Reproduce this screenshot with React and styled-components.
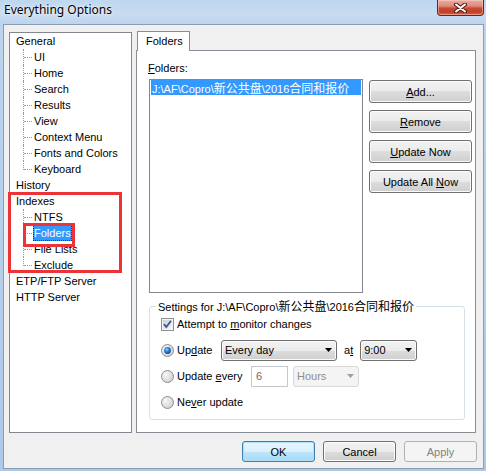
import React from "react";
import styled, { createGlobalStyle } from "styled-components";

const Global = createGlobalStyle`
  html, body { margin: 0; padding: 0; background: #b8d1ec; }
  body {
    font-family: "Liberation Sans", Arial, sans-serif;
    font-size: 11px;
    color: #000;
  }
  * { box-sizing: border-box; }
`;

const Window = styled.div`
  position: relative;
  width: 486px;
  height: 471px;
  display: flex;
  flex-direction: column;
  overflow: hidden;
  background: linear-gradient(180deg, #bed6ef 0px, #c8dcf2 14px, #bcd4ee 24px, #aec9e8 100%);
`;

const TitleBar = styled.div`
  flex: none;
  height: 24px;
  display: flex;
  align-items: flex-start;
  justify-content: space-between;
  padding: 0 2px 0 4px;
`;

const Title = styled.div`
  font-family: "Noto Sans", "Liberation Sans", sans-serif;
  font-size: 12px;
  line-height: 20px;
  color: #000;
  text-shadow: 0 0 6px rgba(255, 255, 255, 0.9), 0 0 2px rgba(255, 255, 255, 0.8);
`;

const CloseButton = styled.div`
  width: 47px;
  height: 16px;
  display: flex;
  align-items: center;
  justify-content: center;
  border: 1px solid #6a2418;
  border-top: none;
  border-radius: 0 0 4px 4px;
  background: linear-gradient(180deg, #e9aca0 0%, #dc8b7b 40%, #c94a33 55%, #c63f27 80%, #d56a4c 100%);
  box-shadow: inset 0 0 0 1px rgba(255, 220, 210, 0.45);
`;

const Client = styled.div`
  flex: 1;
  margin: 0 2px 2px 3px;
  border: 1px solid #8a9db3;
  background: #f0f0f0;
  display: flex;
  flex-direction: column;
  padding: 6px 6px 0 5px;
`;

const MainRow = styled.div`
  display: flex;
  align-items: flex-start;
  gap: 4px;
`;

const Tree = styled.div`
  flex: none;
  width: 123px;
  height: 401px;
  margin-top: 1px;
  border: 1px solid #828790;
  background: #fff;
  padding: 0 0 0 5px;
`;

const NodeRow = styled.div`
  height: 16px;
  line-height: 16px;
  white-space: nowrap;
`;

const Children = styled.div`
  margin-left: 8px;
`;

const ChildRow = styled.div`
  position: relative;
  height: 16px;
  line-height: 16px;
  padding-left: 10px;
  white-space: nowrap;

  &::before {
    content: "";
    position: absolute;
    left: 0;
    top: 0;
    height: ${(p) => (p.$last ? "9px" : "16px")};
    border-left: 1px dotted #9a9a9a;
  }
  &::after {
    content: "";
    position: absolute;
    left: 1px;
    top: 8px;
    width: 8px;
    border-top: 1px dotted #9a9a9a;
  }
`;

const NodeLabel = styled.span`
  display: inline-block;
  padding: 0 1px;
  height: 16px;
  line-height: 16px;
  background: ${(p) => (p.$selected ? "#3399ff" : "transparent")};
  color: ${(p) => (p.$selected ? "#fff" : "#000")};
  outline: ${(p) => (p.$selected ? "1px dotted #1b3f6b" : "none")};
  outline-offset: -1px;
`;

const Tabs = styled.div`
  flex: none;
  width: 340px;
  display: flex;
  flex-direction: column;
`;

const TabStrip = styled.div`
  display: flex;
  height: 20px;
  padding-left: 1px;
`;

const Tab = styled.div`
  position: relative;
  z-index: 1;
  height: 20px;
  padding: 0 6px 0 8px;
  border: 1px solid #898c95;
  border-bottom: none;
  background: #fff;
  line-height: 18px;
`;

const TabPanel = styled.div`
  height: 383px;
  margin-top: -1px;
  border: 1px solid #898c95;
  background: #fff;
  padding: 10px 2px 0 11px;
  display: flex;
  flex-direction: column;
`;

const FieldLabel = styled.div`
  height: 14px;
  line-height: 14px;
  margin-bottom: 4px;
`;

const ListRow = styled.div`
  display: flex;
  align-items: flex-start;
  gap: 6px;
  padding-left: 1px;
`;

const ListBox = styled.div`
  flex: none;
  width: 214px;
  height: 214px;
  border: 1px solid #828790;
  background: #fff;
  padding: 0 1px;
`;

const ListItem = styled.div`
  height: 15px;
  line-height: 15px;
  padding-left: 1px;
  background: #3399ff;
  color: #fff;
  white-space: nowrap;
`;

const Cjk = styled.span`
  font-family: "Noto Sans CJK SC", sans-serif;
  font-size: 12px;
`;

const ButtonColumn = styled.div`
  display: flex;
  flex-direction: column;
  gap: 7px;
  margin-top: 1px;
`;

const Button = styled.div`
  flex: none;
  width: ${(p) => p.$w}px;
  height: ${(p) => p.$h}px;
  display: flex;
  align-items: center;
  justify-content: center;
  border-radius: 3px;
  border: 1px solid ${(p) => (p.$disabled ? "#adb2b5" : p.$default ? "#3c7fb1" : "#707070")};
  color: ${(p) => (p.$disabled ? "#838383" : "#000")};
  background: ${(p) =>
    p.$disabled
      ? "#f4f4f4"
      : p.$default
      ? "linear-gradient(180deg, #eaf6fd 0%, #d9f0fc 50%, #bee6fd 50%, #a7d9f5 100%)"
      : "linear-gradient(180deg, #f2f2f2 0%, #ebebeb 50%, #dddddd 50%, #cfcfcf 100%)"};
  box-shadow: ${(p) =>
    p.$disabled ? "none" : p.$default ? "inset 0 0 0 1px #aee0fb" : "inset 0 0 0 1px #fcfcfc"};
`;

const GroupBox = styled.fieldset`
  width: 316px;
  margin: 6px 0 0 1px;
  padding: 0 0 6px 11px;
  border: 1px solid #d5dfe5;
  border-radius: 3px;
  display: flex;
  flex-direction: column;
  gap: 4px;
`;

const Legend = styled.legend`
  padding: 0 2px;
  margin-left: -5px;
  line-height: 14px;
  height: 14px;
  white-space: nowrap;
`;

const OptionRow = styled.div`
  height: 22px;
  display: flex;
  align-items: center;
`;

const OptionLabel = styled.span`
  margin-left: 3px;
  width: ${(p) => (p.$w ? `${p.$w}px` : "auto")};
  flex: none;
  white-space: nowrap;
`;

const Combo = styled.div`
  flex: none;
  width: ${(p) => p.$w}px;
  height: 21px;
  margin-left: ${(p) => p.$ml || 0}px;
  display: flex;
  align-items: center;
  justify-content: space-between;
  padding: 0 4px 0 3px;
  border-radius: 3px;
  border: 1px solid ${(p) => (p.$disabled ? "#d9d9d9" : "#707070")};
  color: ${(p) => (p.$disabled ? "#8d8d8d" : "#000")};
  background: ${(p) =>
    p.$disabled
      ? "#f4f4f4"
      : "linear-gradient(180deg, #f2f2f2 0%, #ebebeb 50%, #dddddd 50%, #cfcfcf 100%)"};
  box-shadow: ${(p) => (p.$disabled ? "none" : "inset 0 0 0 1px #fcfcfc")};
`;

const EditBox = styled.div`
  flex: none;
  width: 37px;
  height: 21px;
  line-height: 19px;
  padding-left: 4px;
  border: 1px solid #c6c9cc;
  background: #fff;
  color: #6d6d6d;
`;

const Small = styled.span`
  margin: 0 7px;
`;

const Footer = styled.div`
  display: flex;
  justify-content: flex-end;
  gap: 8px;
  margin-top: 8px;
`;

const Annotation = styled.div`
  position: absolute;
  left: ${(p) => p.$x}px;
  top: ${(p) => p.$y}px;
  width: ${(p) => p.$w}px;
  height: ${(p) => p.$h}px;
  border: 3px solid #ec3338;
  pointer-events: none;
`;

const CloseGlyph = () => (
  <svg width="13" height="10" viewBox="0 0 13 10">
    <path d="M2 1.5 L11 8.5 M11 1.5 L2 8.5" stroke="#4a1d16" strokeWidth="4" strokeLinecap="round" />
    <path d="M2 1.5 L11 8.5 M11 1.5 L2 8.5" stroke="#ffffff" strokeWidth="2" strokeLinecap="round" />
  </svg>
);

const CheckBox = () => (
  <svg width="13" height="13" viewBox="0 0 13 13">
    <defs>
      <linearGradient id="cbg" x1="0" y1="0" x2="1" y2="1">
        <stop offset="0" stopColor="#cbcfd5" />
        <stop offset="1" stopColor="#f7f7f7" />
      </linearGradient>
    </defs>
    <rect x="0.5" y="0.5" width="12" height="12" fill="#f4f4f4" stroke="#8e8f8f" />
    <rect x="2" y="2" width="9" height="9" fill="url(#cbg)" />
    <path d="M3 6.2 L5.3 9 L10 2.8" stroke="#3c5a99" strokeWidth="1.9" fill="none" />
  </svg>
);

const Radio = ({ checked }) => (
  <svg width="13" height="13" viewBox="0 0 13 13">
    <defs>
      <radialGradient id="rbg" cx="0.35" cy="0.35" r="0.8">
        <stop offset="0" stopColor="#f6f6f6" />
        <stop offset="1" stopColor="#c9ccd1" />
      </radialGradient>
      <radialGradient id="rdot" cx="0.4" cy="0.35" r="0.7">
        <stop offset="0" stopColor="#8ad4ff" />
        <stop offset="0.5" stopColor="#2a7bd0" />
        <stop offset="1" stopColor="#0d3f8a" />
      </radialGradient>
    </defs>
    <circle cx="6.5" cy="6.5" r="6" fill="url(#rbg)" stroke="#8e8f8f" />
    {checked && <circle cx="6.5" cy="6.5" r="3.4" fill="url(#rdot)" />}
  </svg>
);

const Arrow = ({ color = "#000" }) => (
  <svg width="7" height="4" viewBox="0 0 7 4">
    <path d="M0 0 L7 0 L3.5 4 Z" fill={color} />
  </svg>
);

const treeData = [
  {
    label: "General",
    children: ["UI", "Home", "Search", "Results", "View", "Context Menu", "Fonts and Colors", "Keyboard"],
  },
  { label: "History" },
  { label: "Indexes", children: ["NTFS", "Folders", "File Lists", "Exclude"] },
  { label: "ETP/FTP Server" },
  { label: "HTTP Server" },
];

export default function App() {
  return (
    <>
      <Global />
      <Window>
        <TitleBar>
          <Title>Everything Options</Title>
          <CloseButton>
            <CloseGlyph />
          </CloseButton>
        </TitleBar>
        <Client>
          <MainRow>
            <Tree>
              {treeData.map((node) => (
                <React.Fragment key={node.label}>
                  <NodeRow>
                    <NodeLabel>{node.label}</NodeLabel>
                  </NodeRow>
                  {node.children && (
                    <Children>
                      {node.children.map((c, i) => (
                        <ChildRow key={c} $last={i === node.children.length - 1}>
                          <NodeLabel $selected={c === "Folders"}>{c}</NodeLabel>
                        </ChildRow>
                      ))}
                    </Children>
                  )}
                </React.Fragment>
              ))}
            </Tree>
            <Tabs>
              <TabStrip>
                <Tab>Folders</Tab>
              </TabStrip>
              <TabPanel>
                <FieldLabel>
                  <u>F</u>olders:
                </FieldLabel>
                <ListRow>
                  <ListBox>
                    <ListItem>
                      J:\AF\Copro\<Cjk>新公共盘</Cjk>\2016<Cjk>合同和报价</Cjk>
                    </ListItem>
                  </ListBox>
                  <ButtonColumn>
                    <Button $w={103} $h={23}>
                      <span><u>A</u>dd...</span>
                    </Button>
                    <Button $w={103} $h={23}>
                      <span><u>R</u>emove</span>
                    </Button>
                    <Button $w={103} $h={23}>
                      <span><u>U</u>pdate Now</span>
                    </Button>
                    <Button $w={103} $h={23}>
                      <span>Update All <u>N</u>ow</span>
                    </Button>
                  </ButtonColumn>
                </ListRow>
                <GroupBox>
                  <Legend>
                    Settings for J:\AF\Copro\<Cjk>新公共盘</Cjk>\2016<Cjk>合同和报价</Cjk>
                  </Legend>
                  <OptionRow>
                    <CheckBox />
                    <OptionLabel>
                      Attempt to <u>m</u>onitor changes
                    </OptionLabel>
                  </OptionRow>
                  <OptionRow>
                    <Radio checked />
                    <OptionLabel $w={44}>
                      Up<u>d</u>ate
                    </OptionLabel>
                    <Combo $w={116}>
                      <span>Every day</span>
                      <Arrow />
                    </Combo>
                    <Small>
                      a<u>t</u>
                    </Small>
                    <Combo $w={57}>
                      <span>9:00</span>
                      <Arrow />
                    </Combo>
                  </OptionRow>
                  <OptionRow>
                    <Radio />
                    <OptionLabel $w={74}>
                      Update <u>e</u>very
                    </OptionLabel>
                    <EditBox>6</EditBox>
                    <Combo $w={66} $ml={5} $disabled>
                      <span>Hours</span>
                      <Arrow color="#a0a0a0" />
                    </Combo>
                  </OptionRow>
                  <OptionRow>
                    <Radio />
                    <OptionLabel>
                      Ne<u>v</u>er update
                    </OptionLabel>
                  </OptionRow>
                </GroupBox>
              </TabPanel>
            </Tabs>
          </MainRow>
          <Footer>
            <Button $w={73} $h={21} $default>
              OK
            </Button>
            <Button $w={73} $h={21}>
              Cancel
            </Button>
            <Button $w={73} $h={21} $disabled>
              Apply
            </Button>
          </Footer>
        </Client>
        <Annotation $x={8} $y={192} $w={114} $h={81} />
        <Annotation $x={23} $y={223} $w={52} $h={24} />
      </Window>
    </>
  );
}
